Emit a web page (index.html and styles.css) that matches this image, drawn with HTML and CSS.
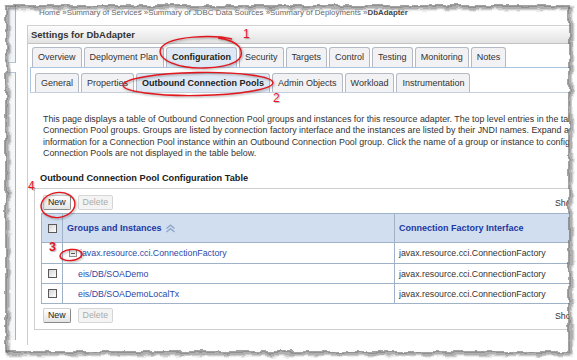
FILE: index.html
```html
<!DOCTYPE html>
<html>
<head>
<meta charset="utf-8">
<title>Settings for DbAdapter</title>
<link rel="stylesheet" href="styles.css">
</head>
<body>
<div class="sheet">
  <div class="shot">
    <div class="sidebar">
      <div class="side-top"></div>
      <div class="side-bottom"></div>
    </div>
    <div class="main">
      <div class="crumbs">Home »Summary of Services »Summary of JDBC Data Sources »Summary of Deployments »<b>DbAdapter</b></div>
      <div class="panel">
        <div class="titlebar">Settings for DbAdapter</div>
        <div class="tabs tabs-main">
          <span class="tab">Overview</span>
          <span class="tab">Deployment Plan</span>
          <span class="tab on">Configuration</span>
          <span class="tab">Security</span>
          <span class="tab">Targets</span>
          <span class="tab">Control</span>
          <span class="tab">Testing</span>
          <span class="tab">Monitoring</span>
          <span class="tab">Notes</span>
        </div>
        <div class="subwrap">
          <div class="tabs tabs-sub">
            <span class="tab">General</span>
            <span class="tab">Properties</span>
            <span class="tab on">Outbound Connection Pools</span>
            <span class="tab">Admin Objects</span>
            <span class="tab">Workload</span>
            <span class="tab">Instrumentation</span>
          </div>
        </div>
        <div class="content">
          <p class="intro">This page displays a table of Outbound Connection Pool groups and instances for this resource adapter. The top level entries in the table are Outbound<br>Connection Pool groups. Groups are listed by connection factory interface and the instances are listed by their JNDI names. Expand a group to see<br>information for a Connection Pool instance within an Outbound Connection Pool group. Click the name of a group or instance to configure it. Empty<br>Connection Pools are not displayed in the table below.</p>
          <h2 class="heading">Outbound Connection Pool Configuration Table</h2>
          <div class="tablebox">
            <div class="toolbar">
              <div class="btns"><button class="btn">New</button><button class="btn off" disabled>Delete</button></div>
              <span class="show">Showing 1 to 3 of 3 Previous | Next</span>
            </div>
            <div class="grid">
              <div class="cell head chk"><span class="box"></span></div>
              <div class="cell head">Groups and Instances <svg class="sort" width="11" height="9" viewBox="0 0 11 9"><path d="M1.5 4.5 L5.5 1.2 L9.5 4.5 M1.5 8 L5.5 4.7 L9.5 8" fill="none" stroke="#8fa6c6" stroke-width="1.4"/></svg></div>
              <div class="cell head">Connection Factory Interface</div>

              <div class="cell chk r1"></div>
              <div class="cell r1 grp"><span class="exp"></span><a class="lnk">javax.resource.cci.ConnectionFactory</a></div>
              <div class="cell r1 val">javax.resource.cci.ConnectionFactory</div>

              <div class="cell chk"><span class="box"></span></div>
              <div class="cell inst"><a class="lnk">eis/DB/SOADemo</a></div>
              <div class="cell val">javax.resource.cci.ConnectionFactory</div>

              <div class="cell chk"><span class="box"></span></div>
              <div class="cell inst"><a class="lnk">eis/DB/SOADemoLocalTx</a></div>
              <div class="cell val">javax.resource.cci.ConnectionFactory</div>
            </div>
            <div class="toolbar bottom">
              <div class="btns"><button class="btn">New</button><button class="btn off" disabled>Delete</button></div>
              <span class="show">Showing 1 to 3 of 3 Previous | Next</span>
            </div>
          </div>
        </div>
      </div>
    </div>
  </div>

  <svg class="edge" width="577" height="360" viewBox="0 0 577 360">
    <defs>
      <filter id="torn" x="-10%" y="-10%" width="120%" height="120%">
        <feTurbulence type="fractalNoise" baseFrequency="0.09" numOctaves="2" seed="4" result="n"/>
        <feDisplacementMap in="SourceGraphic" in2="n" scale="6" xChannelSelector="R" yChannelSelector="G"/>
      </filter>
      <filter id="blur" x="-5%" y="-5%" width="110%" height="110%">
        <feGaussianBlur stdDeviation="1"/>
      </filter>
    </defs>
    <g filter="url(#torn)">
      <path fill="#fff" fill-rule="evenodd" d="M-30 -30H610V390H-30Z M6 6H569V352H6Z"/>
      <rect x="8" y="8" width="563" height="346" fill="none" stroke="#8a8a8a" stroke-width="2.6" filter="url(#blur)"/>
      <rect x="6" y="6" width="563" height="346" fill="none" stroke="#4a4a4a" stroke-width="0.9"/>
    </g>
  </svg>

  <svg class="marks" width="577" height="360" viewBox="0 0 577 360">
    <g fill="none" stroke="#e3161e" stroke-width="1.4">
      <path d="M232 39 C215 35 170 35 161 48 C155 60 180 69 205 68 C232 67 246 60 240 48 C237 43 228 39 218 38"/>
      <ellipse cx="198" cy="84" rx="75" ry="11.5" transform="rotate(-1 198 84)"/>
      <ellipse cx="58" cy="205" rx="17" ry="12.5" transform="rotate(-8 58 205)"/>
      <ellipse cx="71" cy="255" rx="11" ry="5.5" transform="rotate(-6 71 255)"/>
    </g>
  </svg>
  <span class="num n1">1</span>
  <span class="num n2">2</span>
  <span class="num n3">3</span>
  <span class="num n4">4</span>
</div>
</body>
</html>
```

FILE: styles.css
```css
* { box-sizing: border-box; }
html, body { margin: 0; padding: 0; }
body {
  width: 577px;
  height: 360px;
  overflow: hidden;
  background: #fff;
  font-family: "Liberation Sans", Arial, sans-serif;
  font-size: 8.8px;
  color: #333;
}
.sheet { position: relative; width: 577px; height: 360px; overflow: hidden; }
.shot { display: flex; height: 360px; padding-left: 8px; }

.sidebar { width: 8px; flex: none; display: flex; flex-direction: column; }
.side-top { height: 63px; border-right: 1px solid #9fb3ca; border-bottom: 1px solid #b8c6d6; background: #f1f4f9; }
.side-bottom { margin-top: 9px; height: 268px; border-top: 1px solid #b8c6d6; border-right: 1px solid #9fb3ca; background: #f6f7f9; }

.main { margin-left: 11px; width: 640px; flex: none; display: flex; flex-direction: column; }
.crumbs { height: 25px; padding: 8px 0 0 12px; line-height: 10px; color: #666; white-space: nowrap; font-size: 7.9px; }
.crumbs b { color: #444; }

.panel { border-left: 1px solid #c9ccd0; height: 320px; display: flex; flex-direction: column; }
.titlebar {
  height: 19px; line-height: 17px; padding-left: 3px;
  font-weight: bold; font-size: 9.5px; color: #333;
  background: linear-gradient(#fdfdfd, #e2e2e2);
  border-top: 1px solid #d2d2d2; border-bottom: 1px solid #c2c2c2;
}

.tabs { display: flex; gap: 2px; }
.tabs-main { margin-top: 3px; padding-left: 4px; height: 20px; }
.tab {
  height: 20px; padding: 0 5px; line-height: 19px; font-size: 9px;
  border: 1px solid #b4bac4; border-bottom: none; border-radius: 3px 3px 0 0;
  background: #f2f1f4; white-space: nowrap; color: #333;
}
.tab.on { background: #dfe9f5; font-weight: bold; color: #222; }
.subwrap {
  margin-left: 2px; padding: 5px 0 0 4px;
  border-top: 1px solid #aac3df; border-left: 1px solid #aac3df; border-bottom: 1px solid #c5d0dc;
}
.tabs-sub .tab { height: 19px; line-height: 18px; }

.content { padding-left: 6px; }
.intro { margin: 21px 0 0 9px; line-height: 11.3px; white-space: nowrap; font-size: 8.9px; }
.heading { margin: 14px 0 0 6px; font-size: 9.2px; font-weight: bold; line-height: 11px; color: #222; }

.tablebox { margin-top: 4px; width: 640px; border: 1px solid #cfcfcf; padding-left: 6px; }
.toolbar { display: flex; align-items: center; height: 24px; padding: 6px 0 3px 2px; }
.toolbar.bottom { height: 25px; padding: 4px 0 6px 2px; }
.btns { display: flex; gap: 7px; width: 512px; flex: none; }
.btn {
  height: 15px; padding: 0 4px; margin: 0;
  font-family: inherit; font-size: 8.8px; line-height: 13px; color: #222;
  border: 1px solid; border-color: #cfcfcf #8a8a8a #8a8a8a #cfcfcf; border-radius: 2px;
  background: linear-gradient(#ffffff, #e4e4e4);
}
.btn.off { color: #ababab; border-color: #d6d6d6; background: #f4f4f4; }
.show { white-space: nowrap; color: #333; }

.grid {
  display: grid; grid-template-columns: 21px 332px 260px; grid-auto-rows: 20px;
  grid-template-rows: 29px 21px;
  border-top: 1px solid #9fb2c8; border-left: 1px solid #9fb2c8;
}
.cell {
  display: flex; align-items: center; white-space: nowrap;
  border-right: 1px solid #9fb2c8; border-bottom: 1px solid #9fb2c8;
}
.head { background: #d0def0; font-weight: bold; color: #1c37a2; padding-left: 4px; font-size: 9px; }
.head .sort { margin-left: 3px; }
.chk { justify-content: center; padding-left: 0; }
.box {
  width: 9px; height: 9px; border: 1px solid #5a5a5a;
  background: linear-gradient(135deg, #d4d4d4, #ffffff);
}
.grp { padding-left: 6px; }
.exp {
  width: 8px; height: 8px; border: 1px solid #8f8f8f; background: #efefef; margin-right: 3px;
  display: flex; align-items: center; justify-content: center;
}
.exp::after { content: ""; width: 4px; height: 1px; background: #555; }
.inst { padding-left: 15px; }
.val { padding-left: 4px; color: #333; }
.lnk { color: #2a4aa8; text-decoration: none; }

.edge, .marks { position: absolute; left: 0; top: 0; pointer-events: none; }
.marks { filter: drop-shadow(1px 1px 1px rgba(0,0,0,0.35)); }
.num {
  position: absolute; color: #e3161e; font-family: "Liberation Sans", Arial, sans-serif;
  font-size: 12px; line-height: 12px; text-shadow: 1px 1px 1px rgba(0,0,0,0.3);
}
.n1 { left: 243px; top: 28px; }
.n2 { left: 273px; top: 92px; }
.n3 { left: 49px; top: 241px; font-weight: bold; font-size: 12.5px; }
.n4 { left: 28px; top: 180px; }
```
